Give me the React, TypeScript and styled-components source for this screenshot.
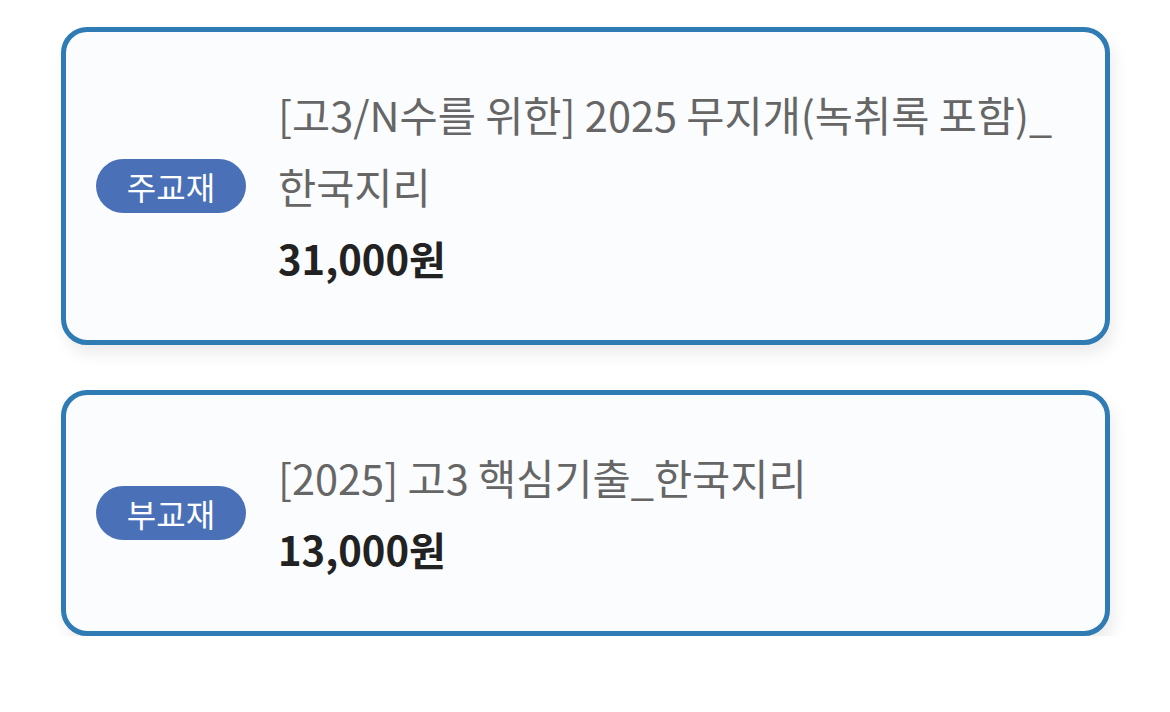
import React from "react";
import styled, { createGlobalStyle } from "styled-components";

const GlobalStyle = createGlobalStyle`
  html, body {
    margin: 0;
    padding: 0;
    background: #ffffff;
    font-family: "Noto Sans CJK KR", "Noto Sans", sans-serif;
  }
`;

const Page = styled.div`
  display: flex;
  flex-direction: column;
  gap: 45px;
  padding: 27px 60px 0 61px;
`;

const Card = styled.div`
  display: flex;
  align-items: center;
  gap: 32px;
  padding: 46px 30px;
  background: #fbfcfe;
  border: 5px solid #2f7bb4;
  border-radius: 26px;
  box-shadow: 4px 9px 16px rgba(0, 0, 0, 0.08);
`;

const Badge = styled.span<{ $color: string }>`
  flex: none;
  display: flex;
  align-items: center;
  justify-content: center;
  width: 150px;
  height: 54px;
  border-radius: 27px;
  background: ${({ $color }) => $color};
  color: #ffffff;
  font-size: 32px;
  font-weight: 400;
  line-height: 1;
`;

const Info = styled.div`
  display: flex;
  flex-direction: column;
`;

const Title = styled.div`
  font-size: 41.5px;
  line-height: 72px;
  color: #666666;
  font-weight: 400;
`;

const Price = styled.div`
  font-size: 40px;
  line-height: 72px;
  color: #222222;
  font-weight: 700;
`;

interface Book {
  kind: string;
  lines: string[];
  price: string;
}

const books: Book[] = [
  {
    kind: "주교재",
    lines: ["[고3/N수를 위한] 2025 무지개(녹취록 포함)_", "한국지리"],
    price: "31,000원",
  },
  {
    kind: "부교재",
    lines: ["[2025] 고3 핵심기출_한국지리"],
    price: "13,000원",
  },
];

const App: React.FC = () => {
  return (
    <>
      <GlobalStyle />
      <Page>
        {books.map((book) => (
          <Card key={book.price}>
            <Badge $color="#4a71b8">{book.kind}</Badge>
            <Info>
              {book.lines.map((line) => (
                <Title key={line}>{line}</Title>
              ))}
              <Price>{book.price}</Price>
            </Info>
          </Card>
        ))}
      </Page>
    </>
  );
};

export default App;
